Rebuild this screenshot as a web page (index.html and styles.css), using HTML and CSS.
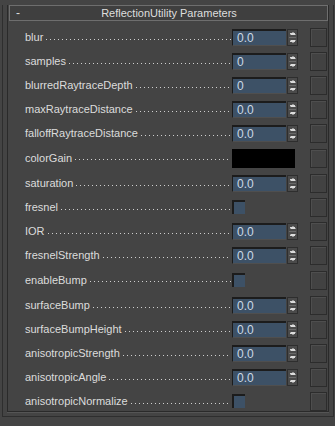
FILE: index.html
```html
<!DOCTYPE html>
<html lang="en">
<head>
    <meta charset="UTF-8">
    <title>ReflectionUtility Parameters</title>
    <link rel="stylesheet" href="styles.css">
</head>
<body>
    <div class="panel">
        <div class="group">
            <div class="rollout-head">
                <span class="toggle">-</span>
                <span class="title">ReflectionUtility Parameters</span>
            </div>

            <div class="row">
                <span class="label">blur</span><span class="leader"></span>
                <span class="control"><span class="field">0.0</span><span class="arrows"></span></span>
                <span class="key"></span>
            </div>
            <div class="row">
                <span class="label">samples</span><span class="leader"></span>
                <span class="control"><span class="field">0</span><span class="arrows"></span></span>
                <span class="key"></span>
            </div>
            <div class="row">
                <span class="label">blurredRaytraceDepth</span><span class="leader"></span>
                <span class="control"><span class="field">0</span><span class="arrows"></span></span>
                <span class="key"></span>
            </div>
            <div class="row">
                <span class="label">maxRaytraceDistance</span><span class="leader"></span>
                <span class="control"><span class="field">0.0</span><span class="arrows"></span></span>
                <span class="key"></span>
            </div>
            <div class="row">
                <span class="label">falloffRaytraceDistance</span><span class="leader"></span>
                <span class="control"><span class="field">0.0</span><span class="arrows"></span></span>
                <span class="key"></span>
            </div>
            <div class="row tall">
                <span class="label">colorGain</span><span class="leader"></span>
                <span class="control"><span class="swatch"></span></span>
                <span class="key"></span>
            </div>
            <div class="row">
                <span class="label">saturation</span><span class="leader"></span>
                <span class="control"><span class="field">0.0</span><span class="arrows"></span></span>
                <span class="key"></span>
            </div>
            <div class="row">
                <span class="label">fresnel</span><span class="leader"></span>
                <span class="control"><span class="check"></span></span>
                <span class="key"></span>
            </div>
            <div class="row">
                <span class="label">IOR</span><span class="leader"></span>
                <span class="control"><span class="field">0.0</span><span class="arrows"></span></span>
                <span class="key"></span>
            </div>
            <div class="row">
                <span class="label">fresnelStrength</span><span class="leader"></span>
                <span class="control"><span class="field">0.0</span><span class="arrows"></span></span>
                <span class="key"></span>
            </div>
            <div class="row tall">
                <span class="label">enableBump</span><span class="leader"></span>
                <span class="control"><span class="check"></span></span>
                <span class="key"></span>
            </div>
            <div class="row">
                <span class="label">surfaceBump</span><span class="leader"></span>
                <span class="control"><span class="field">0.0</span><span class="arrows"></span></span>
                <span class="key"></span>
            </div>
            <div class="row">
                <span class="label">surfaceBumpHeight</span><span class="leader"></span>
                <span class="control"><span class="field">0.0</span><span class="arrows"></span></span>
                <span class="key"></span>
            </div>
            <div class="row">
                <span class="label">anisotropicStrength</span><span class="leader"></span>
                <span class="control"><span class="field">0.0</span><span class="arrows"></span></span>
                <span class="key"></span>
            </div>
            <div class="row">
                <span class="label">anisotropicAngle</span><span class="leader"></span>
                <span class="control"><span class="field">0.0</span><span class="arrows"></span></span>
                <span class="key"></span>
            </div>
            <div class="row">
                <span class="label">anisotropicNormalize</span><span class="leader"></span>
                <span class="control"><span class="check"></span></span>
                <span class="key"></span>
            </div>
        </div>
    </div>
</body>
</html>
```

FILE: styles.css
```css
body {
    margin: 0;
    background-color: #444444;
    font-family: "Liberation Sans", Arial, sans-serif;
    font-size: 11px;
    color: #dcdcdc;
}

/* outer rollout frame */
.panel {
    margin: 13px 1px 0 2px;
    height: 411px;
    border-left: 1px solid #2e2e2e;
    border-right: 1px solid #2e2e2e;
    border-bottom: 1px solid #2e2e2e;
}
.group {
    margin: 0 4px 0 4px;
    height: 406px;
    border-left: 1px solid #2a2a2a;
    border-right: 1px solid #2a2a2a;
    border-bottom: 1px solid #2a2a2a;
    box-shadow: 0 1px 0 #555555;
}

.rollout-head {
    display: flex;
    align-items: center;
    height: 14px;
    margin: -8px 0 4px 1px;
    border: 1px solid #6e6e6e;
    background-color: #3f3f3f;
    position: relative;
}
.toggle {
    width: 14px;
    padding-left: 6px;
    font-size: 12px;
}
.title {
    flex: 1;
    text-align: center;
    padding-right: 19px;
    color: #dedede;
}

.row {
    display: flex;
    align-items: center;
    height: 24px;
    padding: 0 1px 0 17px;
}
.row.tall {
    height: 26px;
    margin-bottom: 0;
}
.label {
    white-space: nowrap;
}
.leader {
    flex: 1;
    align-self: flex-start;
    height: 1px;
    margin: 14px 1px 0 3px;
    background-image: linear-gradient(to right, #cfcfcf 1px, transparent 1px);
    background-size: 4px 1px;
    background-repeat: repeat-x;
}
.control {
    display: flex;
    width: 66px;
    height: 17px;
    align-items: center;
}
.field {
    box-sizing: border-box;
    width: 54px;
    height: 17px;
    padding: 1px 0 0 4px;
    background-color: #3d5166;
    border-top: 2px solid #1c1c1c;
    border-left: 1px solid #1c1c1c;
    border-bottom: 1px solid #4f4f4f;
    color: #cbd9e6;
    font-size: 12px;
    line-height: 13px;
}
.arrows {
    box-sizing: border-box;
    width: 11px;
    height: 17px;
    margin-left: 1px;
    border: 1px solid #2e2e2e;
    background-color: #4a4a4a;
    background-image:
        linear-gradient(#6a6a6a, #6a6a6a),
        linear-gradient(to top, transparent 0, transparent 2px, #d8d8d8 2px, #d8d8d8 3px, transparent 3px),
        linear-gradient(to bottom, transparent 0, transparent 2px, #d8d8d8 2px, #d8d8d8 3px, transparent 3px);
    background-size: 7px 1px, 5px 5px, 5px 5px;
    background-position: 1px 7px, 2px 1px, 2px 9px;
    background-repeat: no-repeat;
    position: relative;
}
.arrows::before,
.arrows::after {
    content: "";
    position: absolute;
    left: 2px;
    border-left: 3px solid transparent;
    border-right: 3px solid transparent;
}
.arrows::before {
    top: 2px;
    border-bottom: 3px solid #dcdcdc;
}
.arrows::after {
    bottom: 2px;
    border-top: 3px solid #dcdcdc;
}
.swatch {
    width: 63px;
    height: 19px;
    background-color: #000000;
}
.check {
    box-sizing: border-box;
    width: 13px;
    height: 14px;
    background-color: #3d5166;
    border-top: 2px solid #1c1c1c;
    border-left: 2px solid #1c1c1c;
}
.key {
    box-sizing: border-box;
    width: 17px;
    height: 19px;
    margin-left: 12px;
    border: 1px solid #2c2c2c;
    box-shadow: inset 1px 1px 0 #4e4e4e;
    background-color: #424242;
}
```
